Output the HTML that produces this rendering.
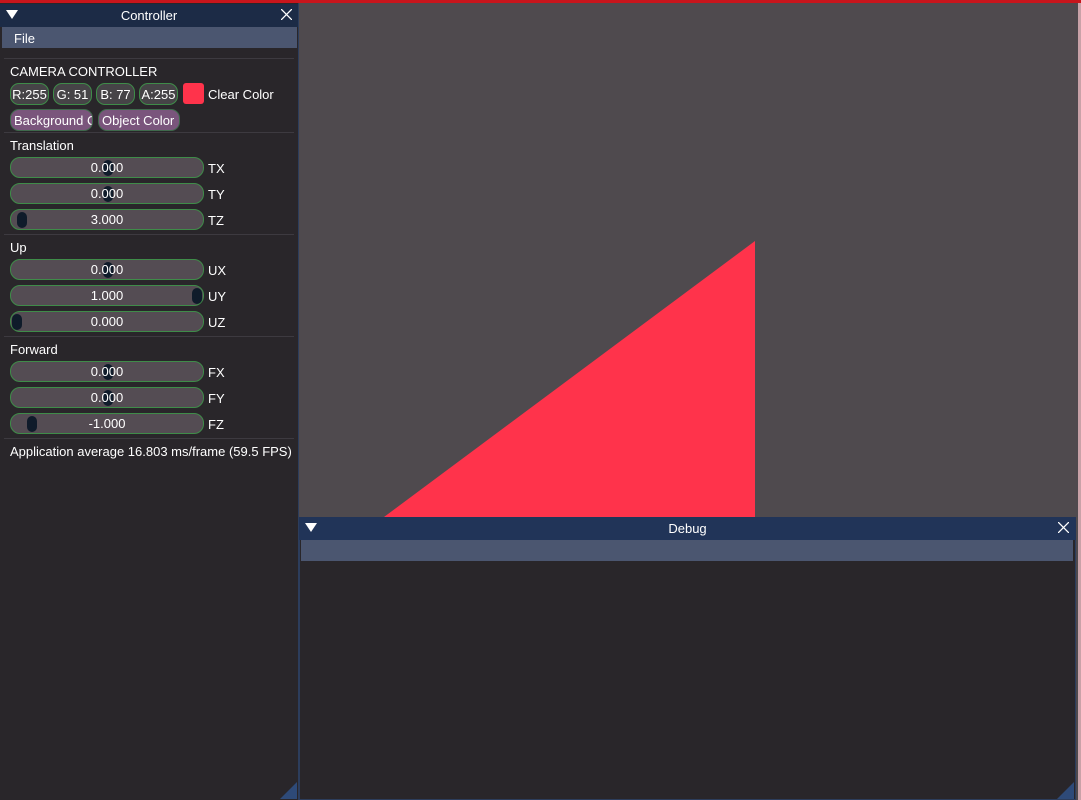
<!DOCTYPE html>
<html><head><style>
body{margin:0;width:1081px;height:800px;background:#4f4a4e;position:relative;overflow:hidden;font-family:"Liberation Sans",sans-serif;font-size:13px;color:#fff}
.a{position:absolute}
.sl{position:absolute;left:10px;width:192px;height:19px;background:#544c53;border:1px solid #3f8c49;border-radius:10px;text-align:center;line-height:20px;color:#fff}
.g{position:absolute;top:2px;width:10px;height:16px;background:#0f1b2a;border-radius:5px}
.lab{position:absolute;left:208px}
.sep{position:absolute;left:4px;width:290px;height:1px;background:#3d3a40}
.cb{position:absolute;top:83px;height:20px;background:#464447;border:1px solid #3f8c49;border-radius:9px;line-height:21px;text-align:center;color:#fff}
.pb{position:absolute;top:109px;height:20px;background:#7a557c;border:1px solid #3f6a4c;border-radius:9px;line-height:21px;color:#fff;overflow:hidden;white-space:nowrap}
</style></head><body>
<div class="a" style="left:0;top:0;width:1081px;height:3px;background:#c8151c"></div>
<div class="a" style="left:1078px;top:3px;width:3px;height:797px;background:#c9a2a8"></div>
<svg class="a" style="left:0;top:0" width="1081" height="800"><polygon points="384,517 755,241 755,517" fill="#ff334b"/></svg>

<div class="a" style="left:0;top:3px;width:298px;height:797px;background:#29262a;border-right:1px solid #2c3d5c"></div>
<div class="a" style="left:0;top:4px;width:298px;height:23px;background:#1c2b46"></div>
<svg class="a" style="left:6px;top:10px" width="12" height="10"><polygon points="0,0 12,0 6,9" fill="#fff"/></svg>
<div class="a" style="left:0;top:8px;width:298px;text-align:center">Controller</div>
<svg class="a" style="left:281px;top:9px" width="11" height="11"><path d="M0,0L11,11M11,0L0,11" stroke="#fff" stroke-width="1.3"/></svg>
<div class="a" style="left:2px;top:27px;width:295px;height:21px;background:#4b5670"></div>
<div class="a" style="left:14px;top:31px">File</div>
<div class="sep" style="top:58px"></div>
<div class="a" style="left:10px;top:64px">CAMERA CONTROLLER</div>
<div class="cb" style="left:10px;width:37px">R:255</div>
<div class="cb" style="left:53px;width:37px">G: 51</div>
<div class="cb" style="left:96px;width:37px">B: 77</div>
<div class="cb" style="left:139px;width:37px">A:255</div>
<div class="a" style="left:183px;top:83px;width:21px;height:21px;background:#ff334b;border-radius:3px"></div>
<div class="a" style="left:208px;top:87px">Clear Color</div>
<div class="pb" style="left:10px;width:78px;padding-left:3px">Background Color</div>
<div class="pb" style="left:98px;width:77px;padding-left:3px">Object Color</div>
<div class="sep" style="top:132px"></div>
<div class="a" style="left:10px;top:138px">Translation</div>
<div class="sl" style="top:157px"><div class="g" style="left:92px"></div><span style="position:relative">0.000</span></div><div class="lab" style="top:161px">TX</div>
<div class="sl" style="top:183px"><div class="g" style="left:92px"></div><span style="position:relative">0.000</span></div><div class="lab" style="top:187px">TY</div>
<div class="sl" style="top:209px"><div class="g" style="left:6px"></div><span style="position:relative">3.000</span></div><div class="lab" style="top:213px">TZ</div>
<div class="sep" style="top:234px"></div>
<div class="a" style="left:10px;top:240px">Up</div>
<div class="sl" style="top:259px"><div class="g" style="left:92px"></div><span style="position:relative">0.000</span></div><div class="lab" style="top:263px">UX</div>
<div class="sl" style="top:285px"><div class="g" style="left:181px"></div><span style="position:relative">1.000</span></div><div class="lab" style="top:289px">UY</div>
<div class="sl" style="top:311px"><div class="g" style="left:1px"></div><span style="position:relative">0.000</span></div><div class="lab" style="top:315px">UZ</div>
<div class="sep" style="top:336px"></div>
<div class="a" style="left:10px;top:342px">Forward</div>
<div class="sl" style="top:361px"><div class="g" style="left:92px"></div><span style="position:relative">0.000</span></div><div class="lab" style="top:365px">FX</div>
<div class="sl" style="top:387px"><div class="g" style="left:92px"></div><span style="position:relative">0.000</span></div><div class="lab" style="top:391px">FY</div>
<div class="sl" style="top:413px"><div class="g" style="left:16px"></div><span style="position:relative">-1.000</span></div><div class="lab" style="top:417px">FZ</div>
<div class="sep" style="top:438px"></div>
<div class="a" style="left:10px;top:444px">Application average 16.803 ms/frame (59.5 FPS)</div>
<svg class="a" style="left:280px;top:782px" width="17" height="17"><polygon points="17,0 17,17 0,17" fill="#2e4a78"/></svg>

<div class="a" style="left:299px;top:517px;width:777px;height:283px;background:#29262a;border:1px solid #2c3d5c;box-sizing:border-box"></div>
<div class="a" style="left:299px;top:517px;width:777px;height:23px;background:#213458"></div>
<svg class="a" style="left:305px;top:523px" width="12" height="10"><polygon points="0,0 12,0 6,9" fill="#fff"/></svg>
<div class="a" style="left:299px;top:521px;width:777px;text-align:center">Debug</div>
<svg class="a" style="left:1058px;top:522px" width="11" height="11"><path d="M0,0L11,11M11,0L0,11" stroke="#fff" stroke-width="1.3"/></svg>
<div class="a" style="left:301px;top:540px;width:772px;height:21px;background:#4b5670"></div>
<svg class="a" style="left:1057px;top:782px" width="17" height="17"><polygon points="17,0 17,17 0,17" fill="#2e4a78"/></svg>
</body></html>
